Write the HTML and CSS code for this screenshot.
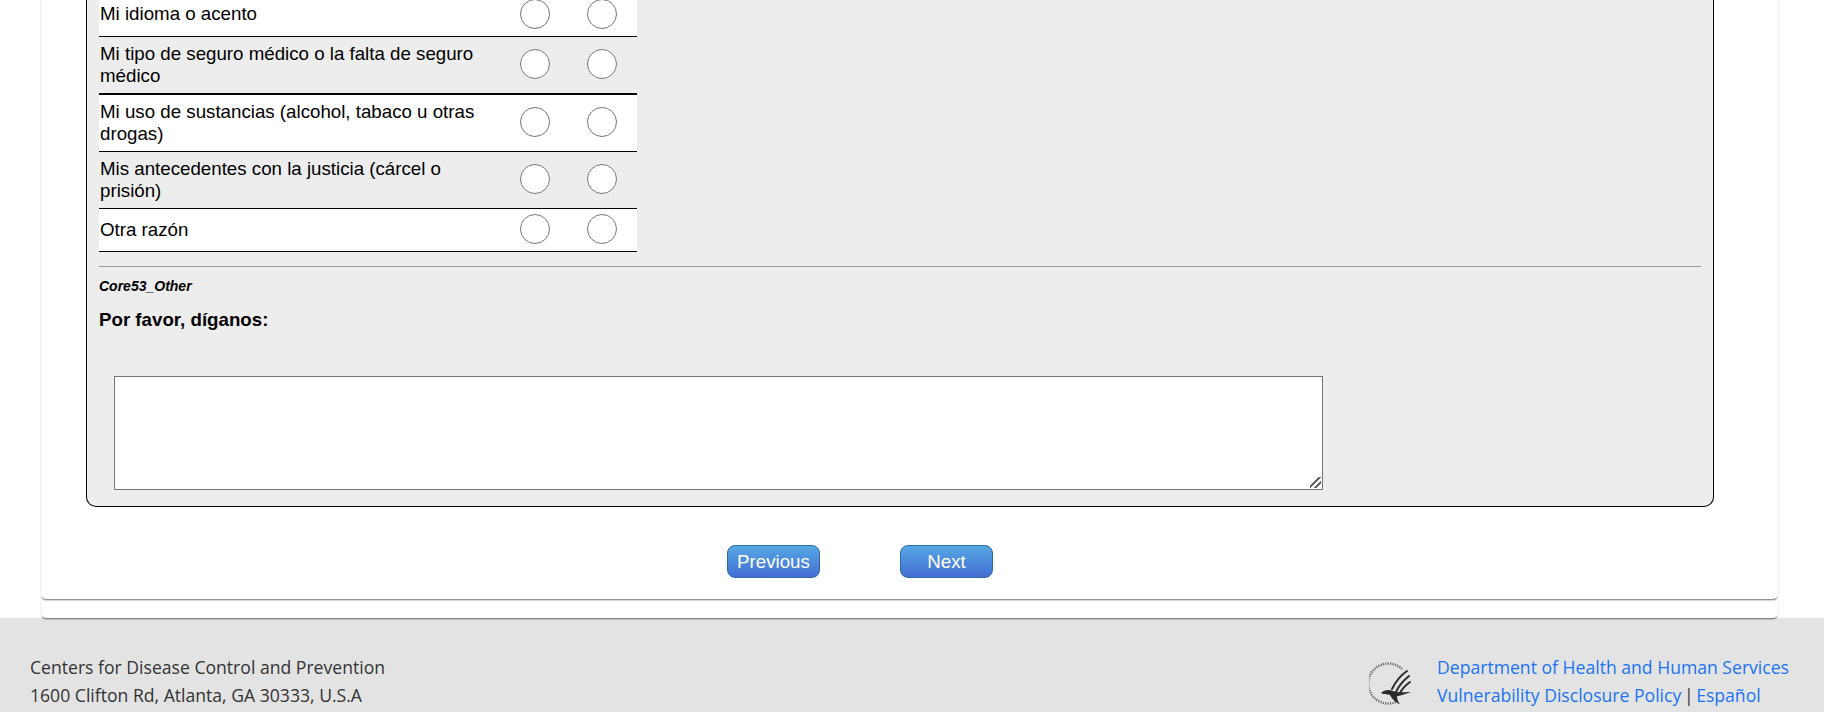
FILE: index.html
```html
<!DOCTYPE html>
<html lang="es">
<head>
    <meta charset="UTF-8">
    <title>Encuesta</title>
    <link rel="stylesheet" href="styles.css">
</head>
<body>
    <div class="card">
        <div class="panel">
            <table class="grid-question">
                <tr class="row-first">
                    <td class="label">Mi idioma o acento</td>
                    <td class="choice"><input type="radio" name="q1"></td>
                    <td class="choice"><input type="radio" name="q1"></td>
                </tr>
                <tr class="row-alt row-heavy">
                    <td class="label">Mi tipo de seguro médico o la falta de seguro médico</td>
                    <td class="choice"><input type="radio" name="q2"></td>
                    <td class="choice"><input type="radio" name="q2"></td>
                </tr>
                <tr>
                    <td class="label">Mi uso de sustancias (alcohol, tabaco u otras drogas)</td>
                    <td class="choice"><input type="radio" name="q3"></td>
                    <td class="choice"><input type="radio" name="q3"></td>
                </tr>
                <tr class="row-alt">
                    <td class="label">Mis antecedentes con la justicia (cárcel o prisión)</td>
                    <td class="choice"><input type="radio" name="q4"></td>
                    <td class="choice"><input type="radio" name="q4"></td>
                </tr>
                <tr class="row-short">
                    <td class="label">Otra razón</td>
                    <td class="choice"><input type="radio" name="q5"></td>
                    <td class="choice"><input type="radio" name="q5"></td>
                </tr>
            </table>
            <hr class="divider">
            <div class="var-name">Core53_Other</div>
            <div class="question">Por favor, díganos:</div>
            <textarea class="answer"></textarea>
        </div>
        <div class="nav-buttons">
            <button class="nav-button" type="button">Previous</button>
            <button class="nav-button" type="button">Next</button>
        </div>
    </div>
    <div class="card-bottom"></div>

    <footer class="site-footer">
        <div class="address">
            <div>Centers for Disease Control and Prevention</div>
            <div>1600 Clifton Rd, Atlanta, GA 30333, U.S.A</div>
        </div>
        <div class="footer-right">
            <svg class="hhs-logo" viewBox="0 0 42 44" width="42" height="44" aria-hidden="true">
                <path d="M33 7 A20 20 0 1 0 27 40" fill="none" stroke="#666" stroke-width="2.4" stroke-dasharray="1.2 1.2"/>
                <g fill="none" stroke="#2b2b2b" stroke-linecap="round">
                    <path d="M38 9 C32 13 27 19 23 27" stroke-width="2"/>
                    <path d="M40 14 C35 18 30 23 27 30" stroke-width="2"/>
                    <path d="M41 20 C37 23 33 27 31 31" stroke-width="2"/>
                </g>
                <path d="M12 31 C15 28 20 27 24 29 C28 31 33 30 42 30 C36 32 31 34 28 34 C28 37 29 40 31 42 C27 41 23 37 21 33 C18 32 15 33 12 31 Z" fill="#2b2b2b"/>
            </svg>
            <div class="footer-links">
                <div><a href="#">Department of Health and Human Services</a></div>
                <div><a href="#">Vulnerability Disclosure Policy</a> <span class="sep">|</span> <a href="#">Español</a></div>
            </div>
        </div>
    </footer>
</body>
</html>
```

FILE: styles.css
```css
html, body {
    height: 100%;
    overflow: hidden;
}

body {
    margin: 0;
    background-color: #fff;
    font-family: "Liberation Sans", Arial, sans-serif;
    color: #000;
}

.card {
    position: relative;
    z-index: 2;
    height: 606px;
    margin: -7px 46px 0 41px;
    box-sizing: border-box;
    background-color: #fff;
    border-radius: 0 0 5px 5px;
    box-shadow: 0 2px 2px -1px rgba(0, 0, 0, 0.55), 0 0 2px rgba(0, 0, 0, 0.15);
    padding: 0 64px 0 45px;
}

.panel {
    background-color: #ededed;
    border: 1px solid #000;
    border-top: none;
    border-radius: 0 0 10px 10px;
    padding: 0 12px 16px 12px;
}

.grid-question {
    border-collapse: separate;
    border-spacing: 0;
    width: 538px;
    table-layout: fixed;
}

.grid-question tr {
    background-color: #fff;
}

.grid-question tr.row-alt {
    background-color: #ededed;
}

.grid-question td {
    box-sizing: border-box;
    height: 57px;
    padding: 0;
    border-bottom: 1px solid #000;
    font-size: 18.72px;
    line-height: 22px;
}

.grid-question tr.row-first td {
    height: 44px;
}

.grid-question tr.row-heavy td {
    height: 58px;
    border-bottom-width: 2px;
}

.grid-question tr.row-short td {
    height: 43px;
}

.grid-question td.label {
    width: 404px;
    padding: 0 21px 1px 1px;
}

.choice {
    width: 67px;
    text-align: center;
}

.choice input {
    width: 30px;
    height: 30px;
    margin: 0 4px 2px 0;
    vertical-align: middle;
}

.divider {
    border: none;
    border-top: 1px solid #999;
    margin: 14px 0 0 0;
}

.var-name {
    margin-top: 11px;
    font-size: 14px;
    line-height: 16px;
    font-weight: bold;
    font-style: italic;
}

.question {
    margin-top: 15px;
    font-size: 18.72px;
    line-height: 22px;
    font-weight: bold;
}

.answer {
    display: block;
    width: 1209px;
    height: 114px;
    box-sizing: border-box;
    margin: 45px 0 0 15px;
    border: 1px solid #767676;
    background-color: #fff;
}

.answer::-webkit-resizer {
    background: linear-gradient(135deg, transparent 38%, #666 38% 50%, transparent 50% 66%, #666 66% 78%, transparent 78%) right 1px bottom 1px / 11px 11px no-repeat;
}

.nav-buttons {
    display: flex;
    justify-content: center;
    gap: 80px;
    margin-top: 38px;
    padding-right: 80px;
}

.nav-button {
    width: 93px;
    height: 33px;
    padding: 0;
    border: 1px solid #2a6ea5;
    border-radius: 8px;
    background: linear-gradient(to bottom, #56a8e4, #436dd3);
    color: #fff;
    font-family: "Liberation Sans", Arial, sans-serif;
    font-size: 18.72px;
}

.card-bottom {
    position: relative;
    z-index: 1;
    height: 19px;
    margin: 0 46px 0 41px;
    background-color: #fff;
    border-radius: 0 0 5px 5px;
    box-shadow: 0 2px 2px -1px rgba(0, 0, 0, 0.55), 0 0 2px rgba(0, 0, 0, 0.08);
}

.site-footer {
    display: flex;
    justify-content: space-between;
    height: 94px;
    box-sizing: border-box;
    padding: 35px 35px 0 30px;
    background-color: #e3e3e3;
    font-family: "Open Sans", sans-serif;
    font-size: 17.6px;
    line-height: 28px;
    color: #333;
}

.footer-right {
    display: flex;
    align-items: flex-start;
    gap: 26px;
}

.hhs-logo {
    margin-top: 9px;
}

.footer-links a {
    color: #1a73f5;
    text-decoration: none;
}

.sep {
    margin: 0 -2px;
}
```
